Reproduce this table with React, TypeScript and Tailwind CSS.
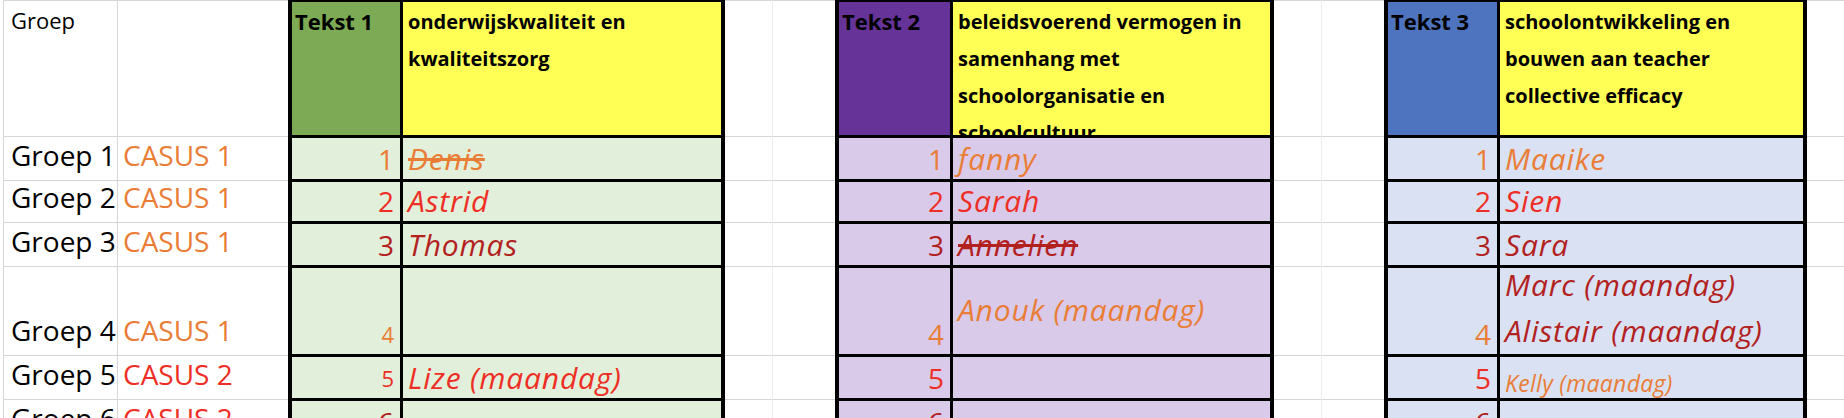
import React from "react";

const ORANGE = "text-[#EA7D36]";
const RED = "text-[#EE2E24]";
const DARK = "text-[#B3211E]";

const ROW_H = ["h-[44px]", "h-[42px]", "h-[44px]", "h-[89px]", "h-[44px]", "h-[44px]"];

type GrayColProps = {
  width: string;
  header?: React.ReactNode;
  cells?: React.ReactNode[];
  borderL?: boolean;
  borderR?: string;
};

function GrayCol({ width, header, cells = [], borderL, borderR = "border-r-0" }: GrayColProps) {
  return (
    <div className={`${width} shrink-0 flex flex-col ${borderL ? "border-l border-[#D6D6D6]" : ""} ${borderR}`}>
      <div className="h-[137px] shrink-0 border-t border-b border-[#D6D6D6] pl-[7px] pt-[1px] text-[22px] leading-[36px] text-black whitespace-nowrap overflow-hidden">
        {header}
      </div>
      {ROW_H.map((h, i) => (
        <div
          key={i}
          className={`${h} shrink-0 border-b border-[#D6D6D6] flex items-end pb-[8px] whitespace-nowrap overflow-hidden`}
        >
          {cells[i]}
        </div>
      ))}
    </div>
  );
}

type DataRow = {
  num: React.ReactNode;
  name?: React.ReactNode;
  nameAlign?: string;
};

type TableProps = {
  width: string;
  numW: string;
  headColor: string;
  bodyColor: string;
  title: string;
  heading: string[];
  rows: DataRow[];
};

function Big({ color, children }: { color: string; children: React.ReactNode }) {
  return <span className={`${color} text-[28px] leading-[28px]`}>{children}</span>;
}

function Name({ color, children, strike }: { color: string; children: React.ReactNode; strike?: boolean }) {
  return (
    <span className={`${color} text-[30px] leading-[28px] tracking-[0.8px] ${strike ? "line-through" : ""}`}>
      {children}
    </span>
  );
}

function Small({ color, children }: { color: string; children: React.ReactNode }) {
  return <span className={`${color} text-[22px] leading-[22px]`}>{children}</span>;
}

function SheetTable({ width, numW, headColor, bodyColor, title, heading, rows }: TableProps) {
  return (
    <div className={`${width} shrink-0 flex flex-col border-t-2 border-x-4 border-black`}>
      <div className="h-[136px] shrink-0 flex border-b-[3px] border-black overflow-hidden">
        <div className={`${numW} shrink-0 ${headColor} border-r-[3px] border-black pl-[3px] pt-[1px] text-[22px] font-bold leading-[37px] text-black whitespace-nowrap`}>
          {title}
        </div>
        <div className="flex-1 bg-[#FFFF55] pl-[5px] pt-[1px] text-[20px] font-bold leading-[37px] text-black whitespace-nowrap overflow-hidden">
          {heading.map((l, i) => (
            <div key={i}>{l}</div>
          ))}
        </div>
      </div>
      {rows.map((r, i) => (
        <div key={i} className={`${ROW_H[i]} shrink-0 flex border-b-[3px] border-black ${bodyColor}`}>
          <div className={`${numW} shrink-0 border-r-[3px] border-black flex items-end justify-end pr-[6px] pb-[6px]`}>
            {r.num}
          </div>
          <div className={`flex-1 flex ${r.nameAlign ?? "items-end pb-[6px]"} pl-[5px] italic whitespace-nowrap overflow-hidden`}>
            {r.name}
          </div>
        </div>
      ))}
    </div>
  );
}

export default function App() {
  const colA = [1, 2, 3, 4, 5, 6].map((n) => (
    <span key={n} className="text-[28px] leading-[28px] text-black">
      Groep {n}
    </span>
  ));
  const colB = [
    <Big color={ORANGE}>CASUS 1</Big>,
    <Big color={ORANGE}>CASUS 1</Big>,
    <Big color={ORANGE}>CASUS 1</Big>,
    <Big color={ORANGE}>CASUS 1</Big>,
    <Big color={RED}>CASUS 2</Big>,
    <Big color={RED}>CASUS 2</Big>,
  ].map((el, i) => <React.Fragment key={i}>{el}</React.Fragment>);

  const t1: DataRow[] = [
    { num: <Big color={ORANGE}>1</Big>, name: <Name color={ORANGE} strike>Denis</Name> },
    { num: <Big color={RED}>2</Big>, name: <Name color={RED}>Astrid</Name> },
    { num: <Big color={DARK}>3</Big>, name: <Name color={DARK}>Thomas</Name> },
    { num: <span className="-mb-[1px]"><Small color={ORANGE}>4</Small></span> },
    { num: <span className="-mb-[1px]"><Small color={RED}>5</Small></span>, name: <Name color={RED}>Lize (maandag)</Name> },
    { num: <Big color={DARK}>6</Big> },
  ];

  const t2: DataRow[] = [
    { num: <Big color={ORANGE}>1</Big>, name: <Name color={ORANGE}>fanny</Name> },
    { num: <Big color={RED}>2</Big>, name: <Name color={RED}>Sarah</Name> },
    { num: <Big color={DARK}>3</Big>, name: <Name color={DARK} strike>Annelien</Name> },
    {
      num: <Big color={ORANGE}>4</Big>,
      name: <Name color={ORANGE}>Anouk (maandag)</Name>,
      nameAlign: "items-center pb-[2px]",
    },
    { num: <Big color={RED}>5</Big> },
    { num: <Big color={DARK}>6</Big> },
  ];

  const t3: DataRow[] = [
    { num: <Big color={ORANGE}>1</Big>, name: <Name color={ORANGE}>Maaike</Name> },
    { num: <Big color={RED}>2</Big>, name: <Name color={RED}>Sien</Name> },
    { num: <Big color={DARK}>3</Big>, name: <Name color={DARK}>Sara</Name> },
    {
      num: <Big color={ORANGE}>4</Big>,
      name: (
        <div className={`${DARK} text-[30px] leading-[46px] tracking-[0.8px]`}>
          <div>Marc (maandag)</div>
          <div>Alistair (maandag)</div>
        </div>
      ),
      nameAlign: "items-end pb-0",
    },
    {
      num: <Big color={RED}>5</Big>,
      name: <span className={`${ORANGE} text-[23px] leading-[22px] tracking-[0.3px]`}>Kelly (maandag)</span>,
      nameAlign: "items-end pb-[4px]",
    },
    { num: <Big color={DARK}>6</Big> },
  ];

  return (
    <div className="w-[1844px] h-[418px] overflow-hidden bg-white flex items-start font-['Open_Sans',sans-serif]">
      <div className="w-[3px] shrink-0" />
      <GrayCol
        width="w-[115px]"
        borderL
        borderR="border-r border-r-[#D6D6D6]"
        header={<span>Groep</span>}
        cells={colA.map((c) => <div className="pl-[7px]">{c}</div>)}
      />
      <GrayCol width="w-[170px]" cells={colB.map((c) => <div className="pl-[5px]">{c}</div>)} />
      <SheetTable
        width="w-[437px]"
        numW="w-[111px]"
        headColor="bg-[#7DAB55]"
        bodyColor="bg-[#E2EFDA]"
        title="Tekst 1"
        heading={["onderwijskwaliteit en", "kwaliteitszorg"]}
        rows={t1}
      />
      <GrayCol width="w-[48px]" borderR="border-r border-r-[#EDEDED]" />
      <GrayCol width="w-[62px]" />
      <SheetTable
        width="w-[439px]"
        numW="w-[114px]"
        headColor="bg-[#663399]"
        bodyColor="bg-[#D9CAEA]"
        title="Tekst 2"
        heading={["beleidsvoerend vermogen in", "samenhang met", "schoolorganisatie en", "schoolcultuur"]}
        rows={t2}
      />
      <GrayCol width="w-[48px]" borderR="border-r border-r-[#EDEDED]" />
      <GrayCol width="w-[62px]" />
      <SheetTable
        width="w-[423px]"
        numW="w-[112px]"
        headColor="bg-[#4E74BF]"
        bodyColor="bg-[#D9E1F2]"
        title="Tekst 3"
        heading={["schoolontwikkeling en", "bouwen aan teacher", "collective efficacy"]}
        rows={t3}
      />
      <GrayCol width="w-[37px]" />
    </div>
  );
}
